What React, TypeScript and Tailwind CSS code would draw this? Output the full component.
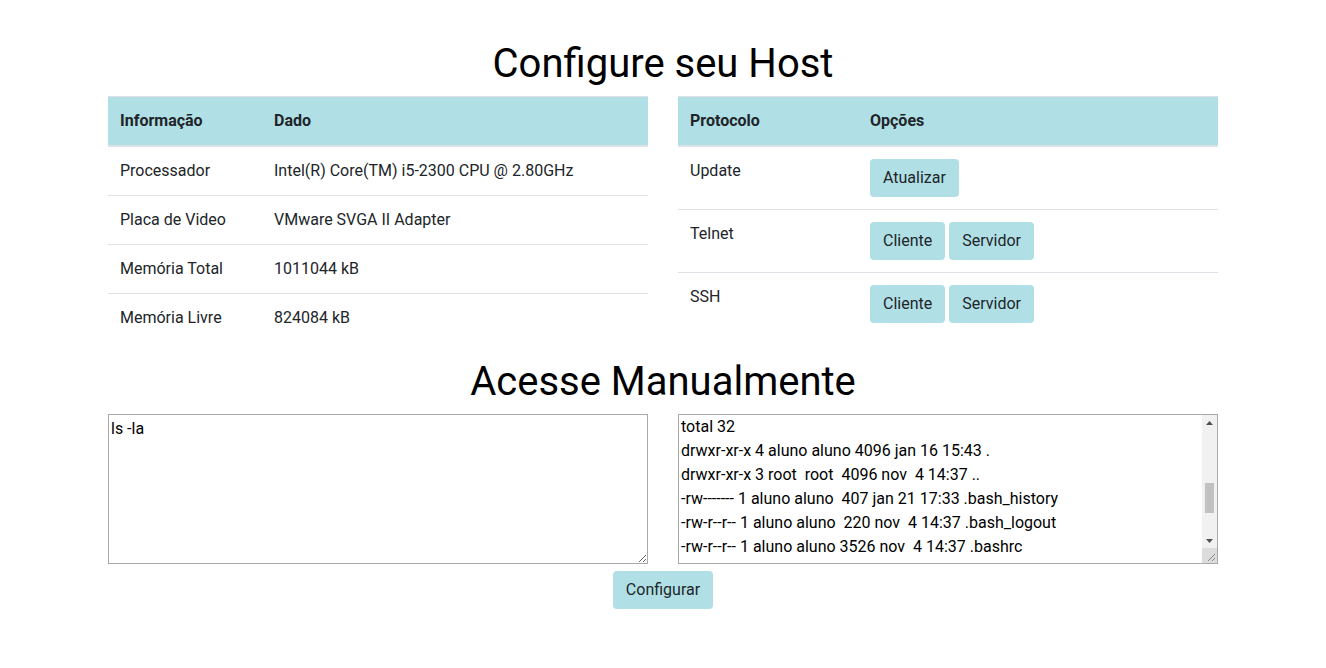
export default function App() {
  const info = [
    ["Processador", "Intel(R) Core(TM) i5-2300 CPU @ 2.80GHz"],
    ["Placa de Video", "VMware SVGA II Adapter"],
    ["Memória Total", "1011044 kB"],
    ["Memória Livre", "824084 kB"],
  ];

  const protocols = [
    { name: "Update", buttons: ["Atualizar"] },
    { name: "Telnet", buttons: ["Cliente", "Servidor"] },
    { name: "SSH", buttons: ["Cliente", "Servidor"] },
  ];

  const output = [
    "total 32",
    "drwxr-xr-x 4 aluno aluno 4096 jan 16 15:43 .",
    "drwxr-xr-x 3 root  root  4096 nov  4 14:37 ..",
    "-rw------- 1 aluno aluno  407 jan 21 17:33 .bash_history",
    "-rw-r--r-- 1 aluno aluno  220 nov  4 14:37 .bash_logout",
    "-rw-r--r-- 1 aluno aluno 3526 nov  4 14:37 .bashrc",
  ];

  return (
    <div className="min-h-screen bg-white pt-10 text-base text-[#212529] font-['Roboto',sans-serif]">
      <main className="mx-auto w-[1110px]">
        <h1 className="mb-2 text-center text-[40px] font-normal leading-[48px] text-black">
          Configure seu Host
        </h1>

        <div className="grid grid-cols-2 items-start gap-[30px]">
          <table className="mb-4 w-full">
            <thead>
              <tr className="bg-[#b0e0e6]">
                <th className="w-[154px] border-t border-b-2 border-[#dee2e6] p-3 text-left font-bold leading-6">
                  Informação
                </th>
                <th className="border-t border-b-2 border-[#dee2e6] p-3 text-left font-bold leading-6">
                  Dado
                </th>
              </tr>
            </thead>
            <tbody>
              {info.map(([label, value]) => (
                <tr key={label}>
                  <td className="border-t border-[#dee2e6] p-3 align-top leading-6">{label}</td>
                  <td className="border-t border-[#dee2e6] p-3 align-top leading-6">{value}</td>
                </tr>
              ))}
            </tbody>
          </table>

          <table className="mb-4 w-full">
            <thead>
              <tr className="bg-[#b0e0e6]">
                <th className="w-[180px] border-t border-b-2 border-[#dee2e6] p-3 text-left font-bold leading-6">
                  Protocolo
                </th>
                <th className="border-t border-b-2 border-[#dee2e6] p-3 text-left font-bold leading-6">
                  Opções
                </th>
              </tr>
            </thead>
            <tbody>
              {protocols.map((p) => (
                <tr key={p.name}>
                  <td className="border-t border-[#dee2e6] p-3 align-top leading-6">{p.name}</td>
                  <td className="border-t border-[#dee2e6] p-3 align-top leading-6">
                    <div className="flex gap-1">
                      {p.buttons.map((b) => (
                        <button
                          key={b}
                          className="rounded border border-transparent bg-[#b0e0e6] px-3 py-1.5 leading-6 text-[#212529]"
                        >
                          {b}
                        </button>
                      ))}
                    </div>
                  </td>
                </tr>
              ))}
            </tbody>
          </table>
        </div>

        <h1 className="mb-2 text-center text-[40px] font-normal leading-[48px] text-black">
          Acesse Manualmente
        </h1>

        <div className="grid grid-cols-2 gap-[30px]">
          <textarea
            defaultValue="ls -la"
            className="block h-[150px] w-full resize border border-[#a9a9a9] p-0.5 text-base leading-6 text-black outline-none"
          />

          <div className="flex h-[150px] w-full border border-[#a9a9a9] text-black">
            <div className="flex-1 overflow-hidden px-0.5 pt-0 leading-6 whitespace-pre">
              {output.map((line, i) => (
                <div key={i}>{line}</div>
              ))}
            </div>
            <div className="flex w-[15px] flex-col bg-[#f1f1f1]">
              <div className="flex h-[15px] items-center justify-center">
                <svg width="7" height="4" viewBox="0 0 7 4">
                  <path d="M0 4 L3.5 0 L7 4 Z" fill="#505050" />
                </svg>
              </div>
              <div className="flex h-[103px] flex-col pt-[53px]">
                <div className="mx-auto h-[30px] w-[9px] bg-[#c1c1c1]" />
              </div>
              <div className="flex h-[15px] items-center justify-center">
                <svg width="7" height="4" viewBox="0 0 7 4">
                  <path d="M0 0 L7 0 L3.5 4 Z" fill="#505050" />
                </svg>
              </div>
              <div className="flex h-[15px] items-end justify-end bg-[#dcdcdc] p-[2px]">
                <svg width="8" height="8" viewBox="0 0 8 8">
                  <path d="M8 1 L1 8 M8 5 L5 8" stroke="#8a8a8a" strokeWidth="1" />
                </svg>
              </div>
            </div>
          </div>
        </div>

        <div className="mt-[7px] flex justify-center">
          <button className="rounded border border-transparent bg-[#b0e0e6] px-3 py-1.5 leading-6 text-[#212529]">
            Configurar
          </button>
        </div>
      </main>
    </div>
  );
}
